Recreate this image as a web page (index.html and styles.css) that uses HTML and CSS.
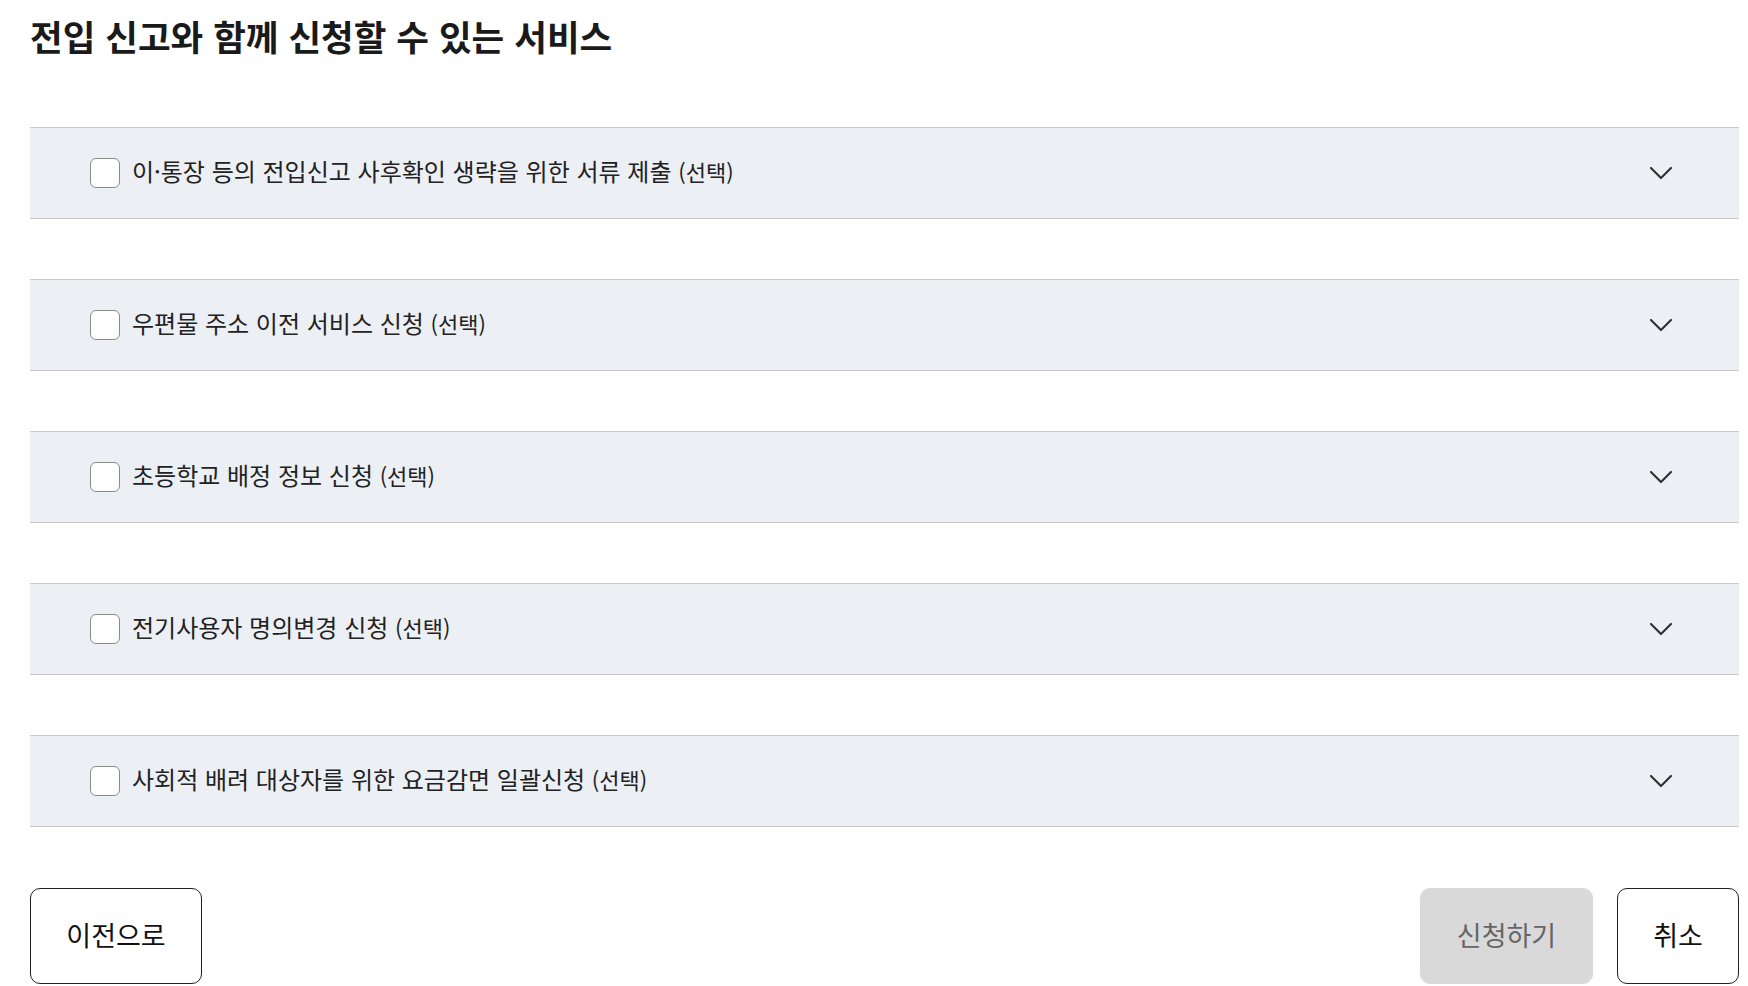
FILE: index.html
```html
<!DOCTYPE html>
<html lang="ko">
<head>
  <meta charset="UTF-8" />
  <meta name="viewport" content="width=device-width, initial-scale=1.0" />
  <title>전입 신고와 함께 신청할 수 있는 서비스</title>
  <link rel="stylesheet" href="styles.css">
</head>
<body>
  <div class="page">
    <h1>전입 신고와 함께 신청할 수 있는 서비스</h1>

    <div class="services">
      <div class="service">
        <label class="check"><input type="checkbox" /><span class="box"></span></label>
        <span class="title">이·통장 등의 전입신고 사후확인 생략을 위한 서류 제출 <small>(선택)</small></span>
        <svg class="chevron" width="24" height="14" viewBox="0 0 24 14"><polyline points="2,2 12,12 22,2" /></svg>
      </div>
      <div class="service">
        <label class="check"><input type="checkbox" /><span class="box"></span></label>
        <span class="title">우편물 주소 이전 서비스 신청 <small>(선택)</small></span>
        <svg class="chevron" width="24" height="14" viewBox="0 0 24 14"><polyline points="2,2 12,12 22,2" /></svg>
      </div>
      <div class="service">
        <label class="check"><input type="checkbox" /><span class="box"></span></label>
        <span class="title">초등학교 배정 정보 신청 <small>(선택)</small></span>
        <svg class="chevron" width="24" height="14" viewBox="0 0 24 14"><polyline points="2,2 12,12 22,2" /></svg>
      </div>
      <div class="service">
        <label class="check"><input type="checkbox" /><span class="box"></span></label>
        <span class="title">전기사용자 명의변경 신청 <small>(선택)</small></span>
        <svg class="chevron" width="24" height="14" viewBox="0 0 24 14"><polyline points="2,2 12,12 22,2" /></svg>
      </div>
      <div class="service">
        <label class="check"><input type="checkbox" /><span class="box"></span></label>
        <span class="title">사회적 배려 대상자를 위한 요금감면 일괄신청 <small>(선택)</small></span>
        <svg class="chevron" width="24" height="14" viewBox="0 0 24 14"><polyline points="2,2 12,12 22,2" /></svg>
      </div>
    </div>

    <div class="actions">
      <button class="btn">이전으로</button>
      <div class="right">
        <button class="btn btn-disabled" disabled>신청하기</button>
        <button class="btn btn-cancel">취소</button>
      </div>
    </div>
  </div>
</body>
</html>
```

FILE: styles.css
```css
body {
  margin: 0;
  font-family: "Noto Sans CJK KR", "Noto Sans", sans-serif;
  color: #222;
  background: #fff;
}
.page {
  padding: 10px 9px 0 30px;
}
h1 {
  margin: 0;
  height: 52px;
  font-size: 35.5px;
  line-height: 52px;
  font-weight: 700;
  color: #1a1a1a;
}
.services {
  margin-top: 65px;
  display: flex;
  flex-direction: column;
  gap: 60px;
}
.service {
  display: flex;
  align-items: center;
  height: 90px;
  padding: 0 66px 0 60px;
  background: #eceff4;
  border-top: 1px solid #c9c9c9;
  border-bottom: 1px solid #c9c9c9;
}
.check {
  display: flex;
  cursor: pointer;
}
.check input {
  display: none;
}
.box {
  width: 28px;
  height: 28px;
  border: 1px solid #8a8a8a;
  border-radius: 6px;
  background: #fff;
}
.title {
  flex: 1;
  margin-left: 12px;
  padding-bottom: 4px;
  font-size: 24px;
  line-height: 30px;
  color: #222;
}
.title small {
  font-size: 22px;
}
.chevron polyline {
  fill: none;
  stroke: #333;
  stroke-width: 2.2;
  stroke-linecap: round;
  stroke-linejoin: round;
}
.actions {
  margin-top: 61px;
  display: flex;
  justify-content: space-between;
}
.right {
  display: flex;
  gap: 24px;
}
.btn {
  height: 96px;
  width: 172px;
  padding-bottom: 4px;
  background: #fff;
  border: 1px solid #222;
  border-radius: 10px;
  font-family: "Noto Sans CJK KR", "Noto Sans", sans-serif;
  font-size: 27px;
  color: #111;
  cursor: pointer;
}
.btn-disabled {
  width: 173px;
  background: #d9d9d9;
  border-color: #d9d9d9;
  color: #666;
  cursor: default;
}
.btn-cancel {
  width: 122px;
}
```
